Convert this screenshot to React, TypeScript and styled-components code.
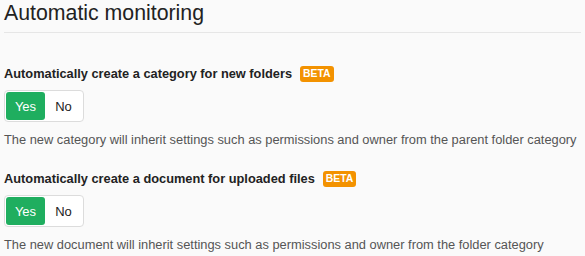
import React, { useState } from "react";
import styled, { createGlobalStyle } from "styled-components";

const Global = createGlobalStyle`
  html, body { margin: 0; padding: 0; background: #fafafa; }
  body { font-family: "Liberation Sans", Arial, sans-serif; color: #333; }
`;

const Page = styled.div`
  padding: 0 4px;
  display: flex;
  flex-direction: column;
`;

const Title = styled.h2`
  margin: 0;
  padding: 3px 0 8px;
  font-size: 21.3px;
  font-weight: 400;
  line-height: 21px;
  color: #222;
  border-bottom: 1px solid #e6e6e6;
`;

const Section = styled.div`
  display: flex;
  flex-direction: column;
`;

const Label = styled.div<{ $top: number }>`
  margin-top: ${(p) => p.$top}px;
  display: flex;
  align-items: center;
  gap: 8px;
  font-size: 12.8px;
  font-weight: 700;
  color: #222;
  line-height: 17px;
  white-space: nowrap;
`;

const Badge = styled.span`
  display: inline-flex;
  align-items: center;
  padding: 0 3px;
  height: 16px;
  border-radius: 3px;
  background: #f39200;
  color: #fff;
  font-size: 10.4px;
  font-weight: 700;
`;

const Toggle = styled.div`
  margin-top: 8px;
  align-self: flex-start;
  display: flex;
  padding: 1px;
  border: 1px solid #dcdcdc;
  border-radius: 4px;
  background: #fff;
`;

const Option = styled.button<{ $active: boolean }>`
  border: 0;
  margin: 0;
  width: ${(p) => (p.$active ? 39 : 37)}px;
  height: 28px;
  border-radius: 3px;
  font-family: inherit;
  font-size: 13px;
  background: ${(p) => (p.$active ? "#1fae5f" : "transparent")};
  color: ${(p) => (p.$active ? "#fff" : "#222")};
  cursor: pointer;
  padding: 0;
`;

const Help = styled.p`
  margin: 9px 0 0;
  font-size: 12.85px;
  line-height: 18px;
  color: #555;
  white-space: nowrap;
`;

function Setting({ label, help, top }: { label: string; help: string; top: number }) {
  const [on, setOn] = useState(true);
  return (
    <Section>
      <Label $top={top}>
        {label}
        <Badge>BETA</Badge>
      </Label>
      <Toggle>
        <Option $active={on} onClick={() => setOn(true)}>Yes</Option>
        <Option $active={!on} onClick={() => setOn(false)}>No</Option>
      </Toggle>
      <Help>{help}</Help>
    </Section>
  );
}

export default function App() {
  return (
    <Page>
      <Global />
      <Title>Automatic monitoring</Title>
      <Setting
        top={32}
        label="Automatically create a category for new folders"
        help="The new category will inherit settings such as permissions and owner from the parent folder category"
      />
      <Setting
        top={21}
        label="Automatically create a document for uploaded files"
        help="The new document will inherit settings such as permissions and owner from the folder category"
      />
    </Page>
  );
}
